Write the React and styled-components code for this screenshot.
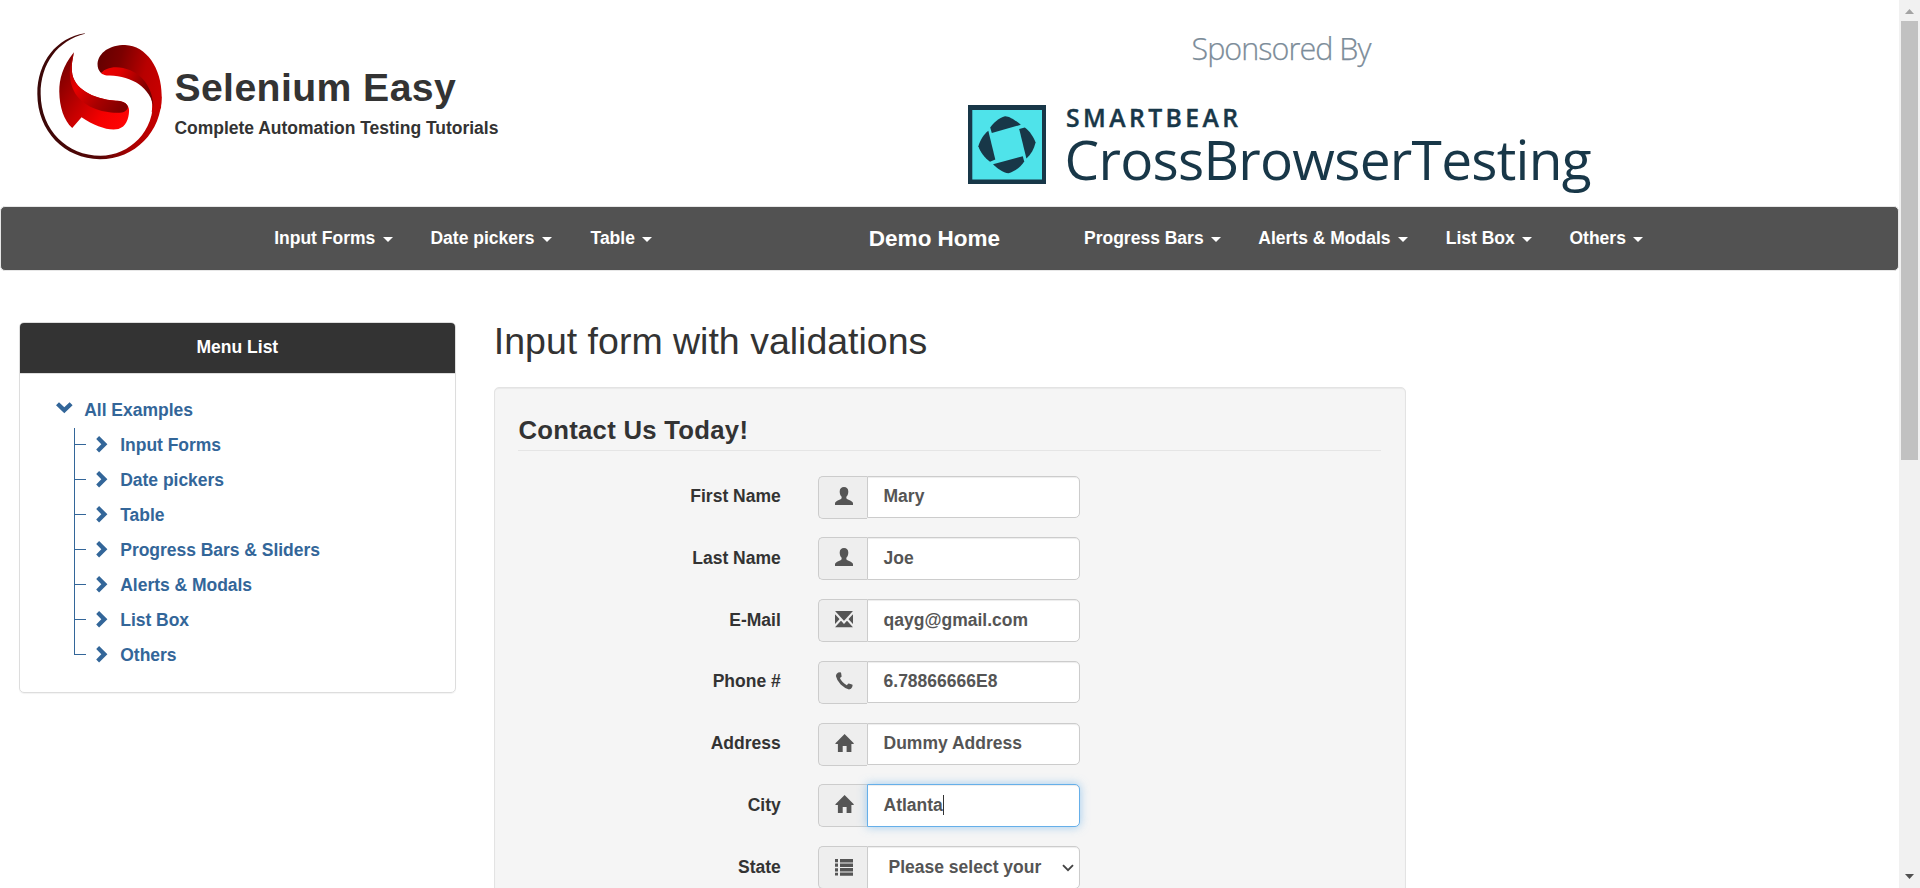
import React from "react";
import styled, { createGlobalStyle } from "styled-components";

const GlobalStyle = createGlobalStyle`
  *, *::before, *::after { box-sizing: border-box; }
  html, body { margin: 0; padding: 0; overflow: hidden; }
  body {
    background: #fff;
    color: #333;
    font-family: "Liberation Sans", Arial, sans-serif;
    font-size: 17.5px;
    line-height: 25px;
  }
`;

const Window = styled.div`
  display: flex;
  width: 1920px;
  height: 888px;
  overflow: hidden;
`;

const Page = styled.div`
  flex: none;
  width: 1899px;
  height: 888px;
  overflow: hidden;
`;

/* ---------- header ---------- */
const Header = styled.header`
  display: flex;
  height: 206px;
`;

const Brand = styled.div`
  display: flex;
  width: 968px;
  padding: 33px 0 0 37px;
`;

const BrandText = styled.div`
  padding: 31px 0 0 12.4px;
`;

const BrandTitle = styled.h1`
  margin: 0;
  font-size: 39.2px;
  line-height: 47px;
  letter-spacing: 0.4px;
  white-space: nowrap;
`;

const BrandTagline = styled.div`
  margin-top: 5px;
  font-weight: bold;
  line-height: 25px;
  letter-spacing: -0.01px;
  white-space: nowrap;
`;

const Sponsor = styled.div`
  width: 640px;
`;

/* ---------- navigation ---------- */
const Navbar = styled.nav`
  display: grid;
  grid-template-columns: 801px 265px 1fr;
  height: 65px;
  border: 1px solid #e7e7e7;
  border-radius: 5px;
  background: #525252;
  color: #fff;
  font-weight: bold;
`;

const NavGroup = styled.div`
  display: flex;
  padding-left: ${(p) => p.$indent}px;
`;

const NavItem = styled.a`
  display: flex;
  flex: none;
  width: ${(p) => p.$w}px;
  padding-top: 19px;
  white-space: nowrap;
`;

const Caret = styled.span`
  width: 10px;
  height: 5px;
  margin: 11px 0 0 7.4px;
  border: 5px solid transparent;
  border-top-color: #fff;
  border-bottom: 0;
`;

const NavHome = styled.a`
  padding-top: 18.5px;
  font-size: 22.5px;
  text-align: center;
`;

/* ---------- body ---------- */
const Columns = styled.div`
  display: flex;
  align-items: flex-start;
  gap: 37.5px;
  padding: 51px 0 0 18.75px;
`;

const Panel = styled.aside`
  flex: none;
  width: 437.25px;
  height: 371px;
  border: 1px solid #ddd;
  border-radius: 5px;
  box-shadow: 0 1px 1px rgba(0, 0, 0, 0.05);
  overflow: hidden;
`;

const PanelHeading = styled.div`
  height: 51px;
  padding-top: 12px;
  border-bottom: 1px solid #ddd;
  background: #333;
  color: #fff;
  font-weight: bold;
  text-align: center;
`;

const TreeRoot = styled.div`
  display: flex;
  height: 35px;
  margin-top: 19px;
  padding: 5px 0 0 36.4px;
  color: #336699;
  font-weight: bold;
`;

const TreeBranch = styled.ul`
  margin: 0;
  padding: 0 0 0 54px;
  list-style: none;
`;

const TreeItem = styled.li`
  display: flex;
  height: 35px;
  color: #336699;
  font-weight: bold;
  letter-spacing: -0.03px;
  padding-top: 5px;
  background:
    linear-gradient(#336699, #336699) 0 0 / 1px ${(p) => (p.$last ? "17px" : "35px")} no-repeat,
    linear-gradient(#336699, #336699) 0 16px / 12px 1px no-repeat;
`;

const TreeIcon = styled.svg`
  flex: none;
  display: block;
  width: 17px;
  height: 17px;
  margin: ${(p) => p.$m};
`;

const Main = styled.main`
  width: 912px;
`;

const PageTitle = styled.h2`
  margin: -1px 0 25px;
  padding-left: 0.3px;
  font-size: 37.5px;
  font-weight: normal;
  line-height: 41px;
`;

const Well = styled.section`
  height: 900px;
  padding: 23.75px;
  border: 1px solid #e3e3e3;
  border-radius: 5px;
  background: #f5f5f5;
  box-shadow: inset 0 1px 1px rgba(0, 0, 0, 0.05);
`;

const Legend = styled.h3`
  height: 39px;
  margin: 0 0 24.8px;
  padding: 3px 0 0 0.2px;
  border-bottom: 1px solid #e5e5e5;
  font-size: 25.7px;
  line-height: 31px;
  letter-spacing: 0.28px;
`;

const FormRow = styled.div`
  display: flex;
  height: 43px;
  margin-bottom: 18.75px;
`;

const FieldLabel = styled.label`
  flex: none;
  width: 262.5px;
  margin-right: 37.3px;
  padding-top: 8.5px;
  font-weight: bold;
  text-align: right;
`;

const Addon = styled.span`
  width: 49px;
  height: 43px;
  padding: 10px 0 0 16px;
  border: 1px solid #ccc;
  border-right: 0;
  border-radius: 5px 0 0 5px;
  background: #eee;
`;

const Glyph = styled.svg`
  display: block;
  width: 18px;
  height: 18px;
`;

const Field = styled.div`
  display: flex;
  width: 213px;
  height: 42.5px;
  padding: ${(p) => (p.$select ? "7.5px 5px 0 20.5px" : "7.5px 6px 0 15.5px")};
  border: 1px solid ${(p) => (p.$focus ? "#66afe9" : "#ccc")};
  border-radius: 0 5px 5px 0;
  background: #fff;
  box-shadow: ${(p) =>
    p.$focus
      ? "inset 0 1px 1px rgba(0,0,0,.075), 0 0 10px rgba(102,175,233,.6)"
      : "inset 0 1px 1px rgba(0,0,0,.075)"};
  color: #555;
  font-weight: bold;
  white-space: nowrap;
`;

const TextCursor = styled.span`
  width: 1px;
  height: 20px;
  margin-top: 2.5px;
  background: #333;
`;

const SelectArrow = styled.svg`
  width: 12px;
  height: 8px;
  margin: 9.5px 0 0 auto;
`;

/* ---------- scrollbar ---------- */
const Scrollbar = styled.div`
  display: flex;
  flex-direction: column;
  align-items: center;
  width: 21px;
  height: 888px;
  background: #f1f1f1;
`;

const ScrollArrow = styled.svg`
  display: block;
  width: 9px;
  height: 5px;
  margin: ${(p) => p.$m};
`;

const ScrollThumb = styled.div`
  width: 17px;
  height: 439px;
  background: #c1c1c1;
`;

function SeleniumLogo() {
  return (
    <svg width="125" height="126.5" viewBox="21 26 376 377" preserveAspectRatio="none">
      <defs>
        <linearGradient id="ring" x1="0" y1="0" x2="1" y2="0">
          <stop offset="0" stopColor="#3a0808" />
          <stop offset="0.5" stopColor="#560505" />
          <stop offset="0.75" stopColor="#a00" />
          <stop offset="1" stopColor="#c80000" />
        </linearGradient>
        <linearGradient id="top" x1="0" y1="0.3" x2="1" y2="0.6">
          <stop offset="0" stopColor="#600" />
          <stop offset="0.3" stopColor="#7c0000" />
          <stop offset="0.7" stopColor="#b80000" />
          <stop offset="1" stopColor="#c80000" />
        </linearGradient>
        <linearGradient id="fold" x1="0" y1="0" x2="1" y2="0.4">
          <stop offset="0" stopColor="#f00000" />
          <stop offset="0.35" stopColor="#e00000" />
          <stop offset="1" stopColor="#700000" />
        </linearGradient>
        <linearGradient id="low" x1="0" y1="0.2" x2="1" y2="0.9">
          <stop offset="0" stopColor="#780000" />
          <stop offset="0.4" stopColor="#c00000" />
          <stop offset="0.7" stopColor="#f40000" />
          <stop offset="1" stopColor="#ff0505" />
        </linearGradient>
        <linearGradient id="lowFold" x1="0" y1="0" x2="1" y2="0.8">
          <stop offset="0" stopColor="#a00000" />
          <stop offset="0.35" stopColor="#e80000" />
          <stop offset="0.7" stopColor="#a80000" />
          <stop offset="1" stopColor="#800000" />
        </linearGradient>
      </defs>
      <path
        fill="url(#ring)"
        d="M165 27C80 40 22 112 22 208C22 318 104 402 210 402C316 402 396 320 396 215L370 220C376 318 300 392 212 392C112 392 33 316 32 208C31 118 84 48 165 28Z"
      />
      <path
        fill="url(#top)"
        d="M203 118C206 84 240 62 286 62C350 64 396 132 396 212L394 250L366 262C374 222 356 160 286 136C250 126 226 134 214 146C206 138 203 130 203 118Z"
      />
      <path
        fill="url(#fold)"
        d="M214 146C224 132 248 124 280 130C336 142 370 188 372 250C364 190 306 154 240 153C226 153 220 150 214 146Z"
      />
      <path
        fill="url(#low)"
        d="M132 83C98 125 88 162 88 200C89 248 102 286 127 309L155 277C196 304 236 318 266 312C288 306 297 284 298 258C298 238 282 228 258 228C188 222 130 192 126 140C124 120 128 105 132 83Z"
      />
      <path
        fill="url(#lowFold)"
        d="M132 83C118 120 112 165 136 206C166 252 226 264 270 264C290 262 296 250 294 244C288 232 276 228 258 228C188 222 130 192 126 140C124 120 128 105 132 83Z"
      />
    </svg>
  );
}

function SponsorArt() {
  return (
    <svg width="640" height="206" viewBox="968 0 640 206" fill="#183748">
      <text x="1191.5" y="60" fontFamily="Open Sans, sans-serif" fontWeight="300" fontSize="30.5" textLength="180" fill="#7c8c99" stroke="#7c8c99" strokeWidth="0.25">
        Sponsored By
      </text>
      <rect x="968" y="105" width="78" height="79" />
      <rect x="972.3" y="110" width="69.7" height="69.5" fill="#4fe3ea" />
      <path d="M1005 116.2C999 118 993.5 122.5 990.2 127.5L991.8 133L1020.8 124.8C1016 120.5 1009 116 1005 116.2Z" />
      <path d="M1019.2 129L1024.8 127.5C1030 131 1034 138 1035.6 142.5C1034 149 1031 154.5 1026.4 158.5Z" />
      <path d="M1022.8 156.2L1024.2 161.5C1021 167 1014 172 1008.5 173.3C1003 172.5 997 168.5 993 164.2Z" />
      <path d="M988.3 130.8L995.3 159.6L990 161.8C984 157.5 980 151.5 978.4 146.3C980 140.5 983.5 134.5 988.3 130.8Z" />
      <text x="1066" y="127.3" fontFamily="Open Sans, sans-serif" fontWeight="600" fontSize="24.7" textLength="172" stroke="#183748" strokeWidth="0.4">
        SMARTBEAR
      </text>
      <text x="1064.6" y="180" fontFamily="Open Sans, sans-serif" fontWeight="400" fontSize="55" textLength="527">
        CrossBrowserTesting
      </text>
    </svg>
  );
}

const glyphs = {
  user: (
    <path d="M9 0C6.4 0 4.7 1.6 4.7 4.4C4.7 6.5 5.2 8 6.3 9.3C6.9 10 6.8 11.4 6 12C4.2 13.2 1 14 .2 15.4Q0 15.8 0 16.4V18H18V16.4Q18 15.8 17.8 15.4C17 14 13.8 13.2 12 12C11.2 11.4 11.1 10 11.7 9.3C12.8 8 13.3 6.5 13.3 4.4C13.3 1.6 11.6 0 9 0Z" />
  ),
  envelope: (
    <g transform="translate(0 19) scale(.015 -.0164)">
      <path d="M25 1100h1150q10 0 12.5 -5t-5.5 -13l-564 -567q-8 -8 -18 -8t-18 8l-564 567q-8 8 -5.5 13t12.5 5zM18 882l264 -264q8 -8 8 -18t-8 -18l-264 -264q-8 -8 -13 -5.5t-5 12.5v550q0 10 5 12.5t13 -5.5zM918 618l264 264q8 8 13 5.5t5 -12.5v-550q0 -10 -5 -12.5t-13 5.5l-264 264q-8 8 -8 18t8 18zM818 482l364 -364q8 -8 5.5 -13t-12.5 -5h-1150q-10 0 -12.5 5t5.5 13l364 364q8 8 18 8t18 -8l164 -164q8 -8 18 -8t18 8l164 164q8 8 18 8t18 -8z" />
    </g>
  ),
  phone: (
    <path d="M3.2 .6L5.2 .2Q5.9 .2 6.1 .9L6.6 4.2Q6.6 4.8 6.2 5.1L4.9 6Q5.9 8.3 7.6 10.1Q9.5 12.1 11.8 13.2L12.9 11.9Q13.2 11.5 13.8 11.6L17 12.4Q17.7 12.6 17.6 13.3L17.2 15Q16.4 17.2 14 17.5Q9.5 16.3 5.7 12.6Q1.8 8.6 .9 4Q1 1.7 3.2 .6Z" />
  ),
  home: (
    <path d="M9.6 0L18.8 9.2Q19 9.9 18.3 10H16.4V18H11.6V12H7.7V18H2.9V10H.8Q.1 9.9 .4 9.2Z" />
  ),
  list: (
    <path d="M0 2H3V5.2H0ZM5 1.9H18V5.5H5ZM0 6.6H3V9.8H0ZM5 6.5H18V10.1H5ZM0 11.2H3V14.4H0ZM5 11.1H18V14.6H5ZM0 15.7H3V18.6H0ZM5 15.6H18V18.8H5Z" />
  ),
};

const leftMenu = [
  ["Input Forms", 156.3],
  ["Date pickers", 160],
  ["Table", 100],
];
const rightMenu = [
  ["Progress Bars", 174.3],
  ["Alerts & Modals", 187.4],
  ["List Box", 123.8],
  ["Others", 100],
];
const tree = ["Input Forms", "Date pickers", "Table", "Progress Bars & Sliders", "Alerts & Modals", "List Box", "Others"];
const fields = [
  { label: "First Name", icon: "user", value: "Mary" },
  { label: "Last Name", icon: "user", value: "Joe" },
  { label: "E-Mail", icon: "envelope", value: "qayg@gmail.com" },
  { label: "Phone #", icon: "phone", value: "6.78866666E8" },
  { label: "Address", icon: "home", value: "Dummy Address" },
  { label: "City", icon: "home", value: "Atlanta", focus: true },
  { label: "State", icon: "list", value: "Please select your", select: true },
];

function Menu({ items, indent }) {
  return (
    <NavGroup $indent={indent}>
      {items.map(([name, w]) => (
        <NavItem key={name} $w={w}>
          {name}
          <Caret />
        </NavItem>
      ))}
    </NavGroup>
  );
}

export default function App() {
  return (
    <Window>
      <GlobalStyle />
      <Page>
        <Header>
          <Brand>
            <SeleniumLogo />
            <BrandText>
              <BrandTitle>Selenium Easy</BrandTitle>
              <BrandTagline>Complete Automation Testing Tutorials</BrandTagline>
            </BrandText>
          </Brand>
          <Sponsor>
            <SponsorArt />
          </Sponsor>
        </Header>
        <Navbar>
          <Menu items={leftMenu} indent={273.2} />
          <NavHome>Demo Home</NavHome>
          <Menu items={rightMenu} indent={17} />
        </Navbar>
        <Columns>
          <Panel>
            <PanelHeading>Menu List</PanelHeading>
            <TreeRoot>
              <TreeIcon viewBox="0 0 17 17" $m="4px 11px 0 0">
                <path fill="#336699" d="M0 3.2L3 .3L8.3 5.3L13.6 .3L16.6 3.2L8.3 11.2Z" />
              </TreeIcon>
              All Examples
            </TreeRoot>
            <TreeBranch>
              {tree.map((name, i) => (
                <TreeItem key={name} $last={i === tree.length - 1}>
                  <TreeIcon viewBox="0 0 17 17" $m="3px 7.5px 0 22px">
                    <path fill="#336699" d="M3.1 0L11.4 8.3L3.1 16.5L.2 13.6L5.3 8.3L.2 3Z" />
                  </TreeIcon>
                  {name}
                </TreeItem>
              ))}
            </TreeBranch>
          </Panel>
          <Main>
            <PageTitle>Input form with validations</PageTitle>
            <Well>
              <Legend>Contact Us Today!</Legend>
              {fields.map((f) => (
                <FormRow key={f.label}>
                  <FieldLabel>{f.label}</FieldLabel>
                  <Addon>
                    <Glyph viewBox="0 0 18 18" fill="#555" overflow="visible">
                      {glyphs[f.icon]}
                    </Glyph>
                  </Addon>
                  <Field $focus={f.focus} $select={f.select}>
                    {f.value}
                    {f.focus && <TextCursor />}
                    {f.select && (
                      <SelectArrow viewBox="0 0 12 8" fill="none" stroke="#444" strokeWidth="1.9">
                        <path d="M1 1.2L6 6.2L11 1.2" />
                      </SelectArrow>
                    )}
                  </Field>
                </FormRow>
              ))}
            </Well>
          </Main>
        </Columns>
      </Page>
      <Scrollbar>
        <ScrollArrow viewBox="0 0 9 5" $m="9px 0 7px">
          <path fill="#a3a3a3" d="M4.5 0L9 5H0Z" />
        </ScrollArrow>
        <ScrollThumb />
        <ScrollArrow viewBox="0 0 9 5" $m="auto 0 9px">
          <path fill="#505050" d="M0 0H9L4.5 5Z" />
        </ScrollArrow>
      </Scrollbar>
    </Window>
  );
}
